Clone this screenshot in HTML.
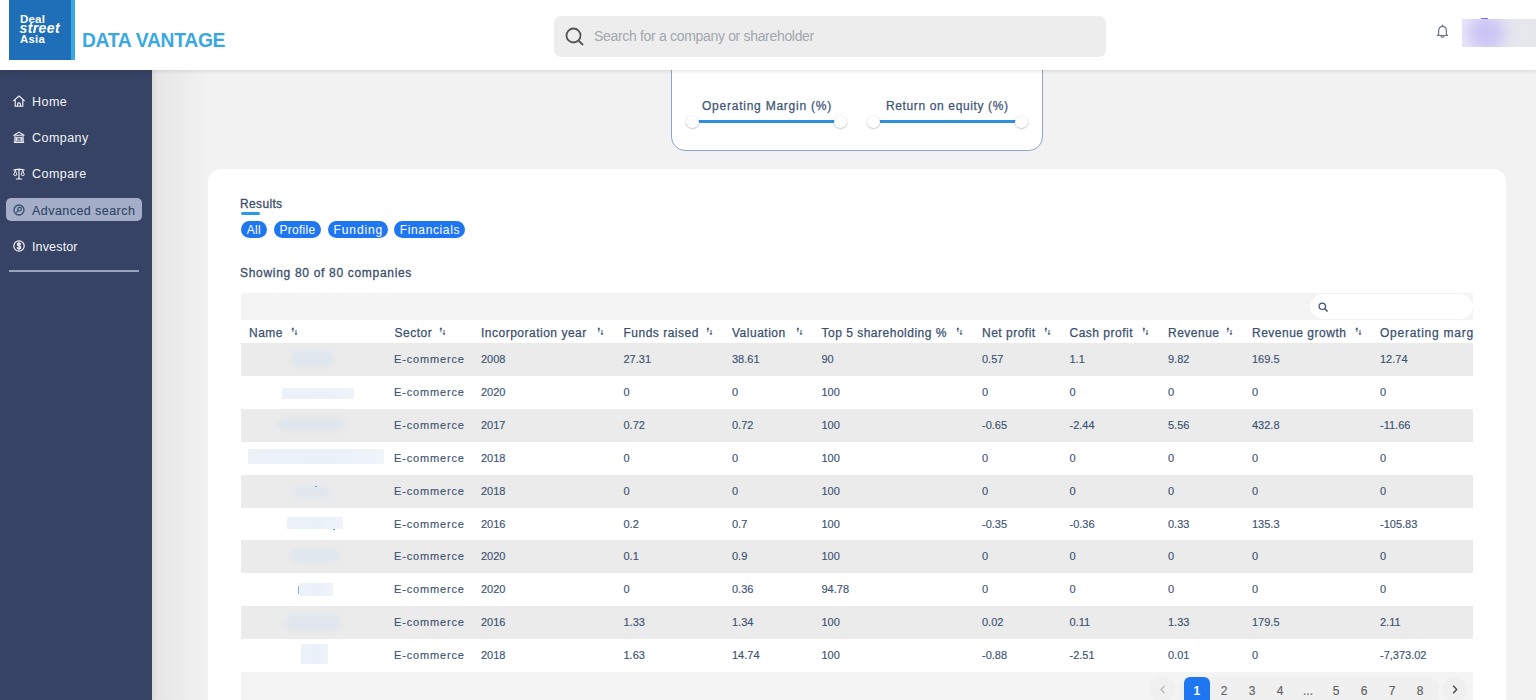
<!DOCTYPE html>
<html><head><meta charset="utf-8">
<style>
*{box-sizing:border-box;margin:0;padding:0}
html,body{width:1536px;height:700px;overflow:hidden;background:#f2f2f2;font-family:"Liberation Sans",sans-serif;position:relative}
.abs{position:absolute}
#header{position:absolute;left:0;top:0;width:1536px;height:70px;background:#fff;box-shadow:0 1px 4px rgba(0,0,0,0.12);z-index:10}
#logo{position:absolute;left:9px;top:0;width:66px;height:60px;background:#1f6fb8;border-right:4px solid #3aa8e0}
#logo .t{position:absolute;left:11px;color:#fff;font-weight:bold;font-size:10px;line-height:10px;letter-spacing:-0.3px}
#brand{position:absolute;left:82px;top:30px;font-size:19.3px;font-weight:bold;color:#3aa8e0;letter-spacing:-0.3px;line-height:22px;white-space:nowrap}
#search{position:absolute;left:554px;top:16px;width:552px;height:41px;background:#ededed;border-radius:7px}
#search .ph{position:absolute;left:40px;top:12px;font-size:14px;color:#a2a7ae;line-height:16px;letter-spacing:-0.32px;white-space:nowrap}
#sidebar{position:absolute;left:0;top:70px;width:152px;height:630px;background:#374364;z-index:5;box-shadow:2px 0 5px rgba(0,0,0,0.07)}
#sshadow{position:absolute;left:152px;top:70px;width:60px;height:630px;background:linear-gradient(90deg,rgba(0,0,0,0.055),rgba(0,0,0,0.03) 35%,rgba(0,0,0,0) 100%)}
.nav{position:absolute;left:0;width:152px;height:23px;color:#f1f3f7;font-size:12.5px;line-height:23px;letter-spacing:0.45px}
.nav span{position:absolute;left:32px;top:0;white-space:nowrap}
.nav svg{position:absolute;left:13px;top:6px}
.nav.sel{left:6px;width:136px;background:#a5aec8;border-radius:5px;color:#2f4866;-webkit-text-stroke:0.15px #2f4866}
.nav.sel span{left:26px;top:1.5px}
.nav.sel svg{left:7px}
#divider{position:absolute;left:9px;top:200px;width:130px;height:2px;background:#9aa3be}
#filter{position:absolute;left:671px;top:20px;width:372px;height:131px;background:#fff;border:1.6px solid #90a2ca;border-radius:14px}
.flabel{position:absolute;font-size:12px;color:#3e5678;white-space:nowrap;line-height:14px;-webkit-text-stroke:0.25px #3e5678}
.track{position:absolute;height:3px;background:#2f8fdb}
.thumb{position:absolute;width:12.5px;height:12.5px;border-radius:50%;background:#fff;box-shadow:0 0.5px 1.5px rgba(0,0,0,0.35)}
#card{position:absolute;left:208px;top:168.5px;width:1298px;height:600px;background:#fff;border-radius:13px}
.ctext{position:absolute;font-size:12px;line-height:14px;color:#3b4e6b;white-space:nowrap;-webkit-text-stroke:0.3px #3b4e6b}
.chip{position:absolute;top:52.5px;height:16.5px;border-radius:9px;background:#1f76f1;color:#fff;font-size:12px;line-height:18px;text-align:center;letter-spacing:0.3px}
#toolbar{position:absolute;left:241px;top:293px;width:1232px;height:27px;background:#f4f4f4;border-radius:3px 3px 0 0}
#tsearch{position:absolute;left:1069px;top:1px;width:163px;height:25px;background:#fff;border-radius:13px;box-shadow:0 0 1px rgba(0,0,0,0.08)}
#thead{position:absolute;left:241px;top:320px;width:1232px;height:23px;background:#fff;overflow:hidden}
.th{position:absolute;top:6px;font-size:12px;line-height:14px;color:#3a5070;white-space:nowrap;letter-spacing:0.5px;-webkit-text-stroke:0.25px #3a5070}
.sort{position:absolute;top:7px}
.tr{position:absolute;left:241px;width:1232px;height:33px;background:#fff;overflow:hidden}
.tr.odd{background:#ebebeb}
.td{position:absolute;top:10px;font-size:11px;line-height:13px;color:#3c5373;white-space:nowrap;-webkit-text-stroke:0.15px #3c5373}
.td.ec{letter-spacing:0.85px}
.blur{position:absolute}
.blur.b{background:#e0e6ed;filter:blur(2px);border-radius:6px}
.blur.r{background:linear-gradient(90deg,#edf2f9,#eaf1f9 60%,#eff4f9);filter:blur(0.4px)}
#pager{position:absolute;left:241px;top:672px;width:1232px;height:40px;background:#f4f4f4}
.pgroup{position:absolute;left:938px;top:5px;width:260px;height:30px;border-radius:12px;background:#f0f0f0}
.pcirc{position:absolute;top:5px;width:25px;height:25px;border-radius:50%;background:#f0f0f0}
.pact{position:absolute;left:943px;top:5px;width:25.5px;height:30px;border-radius:6px;background:#1e76f0;color:#fff;font-size:12px;line-height:29px;text-align:center;font-weight:bold}
.pnum{position:absolute;top:7px;width:24px;height:25px;color:#666;font-size:12px;line-height:25px;text-align:center;-webkit-text-stroke:0.2px #666}
</style></head><body>
<div id="header">
  <div id="logo">
    <div class="t" style="top:13px;font-size:11.5px;line-height:12px;letter-spacing:0.2px">Deal</div>
    <div class="t" style="top:21px;font-style:italic;font-size:14px;line-height:14px;letter-spacing:0.4px;left:10.5px">street</div>
    <div class="t" style="top:33px;font-size:11.3px;line-height:12px;letter-spacing:0.3px">Asia</div>
  </div>
  <div id="brand">DATA VANTAGE</div>
  <div id="search">
    <svg class="abs" style="left:11px;top:11px" width="20" height="20" viewBox="0 0 20 20"><circle cx="8.5" cy="8.5" r="7" fill="none" stroke="#555" stroke-width="1.8"/><line x1="13.5" y1="13.5" x2="18" y2="18" stroke="#555" stroke-width="1.8"/></svg>
    <div class="ph">Search for a company or shareholder</div>
  </div>
  <svg class="abs" style="left:1435px;top:23.5px" width="15" height="15" viewBox="0 0 15 15"><path d="M3.7 10.4 C3.7 8.3 3.5 7.2 3.8 5.6 C4.2 3.5 5.8 2.4 7.5 2.4 C9.2 2.4 10.8 3.5 11.2 5.6 C11.5 7.2 11.3 8.3 11.3 10.4 L12.6 11.5 H2.4 Z" fill="none" stroke="#6b7585" stroke-width="1.2" stroke-linejoin="round"/><path d="M6 11.8 A1.5 1.5 0 0 0 9 11.8" fill="none" stroke="#6b7585" stroke-width="1.2"/><line x1="7.5" y1="1.2" x2="7.5" y2="2.4" stroke="#6b7585" stroke-width="1.3" stroke-linecap="round"/></svg>
  <div class="abs" style="left:1462px;top:19px;width:74px;height:28px;background:linear-gradient(90deg,#ebe8fa 0%,#e4e4f4 45%,#e6e8ee 65%,#e5e7ea 100%);overflow:hidden"><div class="abs" style="left:6px;top:-4px;width:36px;height:36px;border-radius:50%;background:#c9c2f4;filter:blur(8px)"></div></div>
  <div class="abs" style="left:1480.5px;top:18px;width:7px;height:1.3px;background:#7a68e6;border-radius:1px"></div>
</div>
<div id="sidebar">
  <div class="nav" style="top:21px"><svg style="top:4px" width="12" height="12" viewBox="0 0 12 12"><path d="M0.7 5.6 L6 1 L11.3 5.6 M2.2 4.4 V11.2 H9.8 V4.4 M4.6 11.2 V9.2 A1.4 1.4 0 0 1 7.4 9.2 V11.2" fill="none" stroke="#f1f3f7" stroke-width="1.15" stroke-linejoin="round" stroke-linecap="round"/></svg><span>Home</span></div>
  <div class="nav" style="top:57px"><svg style="top:4px" width="12" height="12" viewBox="0 0 12 12"><path d="M0.9 4.2 L6 1.1 L11.1 4.2 Z" fill="none" stroke="#f1f3f7" stroke-width="1.1" stroke-linejoin="round"/><path d="M2 5.3 V11 M10 5.3 V11 M0.8 11.4 H11.2" fill="none" stroke="#f1f3f7" stroke-width="1.3"/><rect x="3.4" y="6.3" width="5.2" height="3.6" fill="none" stroke="#f1f3f7" stroke-width="0.9"/><path d="M4.6 7.1 V9.1 M6 7.1 V9.1 M7.4 7.1 V9.1" stroke="#f1f3f7" stroke-width="0.7"/></svg><span>Company</span></div>
  <div class="nav" style="top:93px"><svg style="top:4.5px" width="12" height="12" viewBox="0 0 12 12"><path d="M6 0.8 V10.6 M3.3 11 H8.7 M0.8 2 Q3.5 1.2 6 1.6 Q8.5 1.2 11.2 2" fill="none" stroke="#f1f3f7" stroke-width="1.2" stroke-linecap="round"/><path d="M2.3 2.3 L0.7 6.8 Q2.3 8.6 3.9 6.8 Z M9.7 2.3 L8.1 6.8 Q9.7 8.6 11.3 6.8 Z" fill="none" stroke="#f1f3f7" stroke-width="1" stroke-linejoin="round"/></svg><span>Compare</span></div>
  <div class="nav sel" style="top:128px"><svg style="top:5.5px" width="12" height="12" viewBox="0 0 12 12"><circle cx="6" cy="6" r="5" fill="none" stroke="#34506c" stroke-width="1.3"/><circle cx="6.6" cy="5.2" r="1.8" fill="none" stroke="#34506c" stroke-width="1.2"/><line x1="5.3" y1="6.5" x2="3.7" y2="8.1" stroke="#34506c" stroke-width="1.2" stroke-linecap="round"/></svg><span>Advanced search</span></div>
  <div class="nav" style="top:166px"><svg style="top:4px" width="12" height="12" viewBox="0 0 12 12"><circle cx="6" cy="6" r="5.2" fill="none" stroke="#f1f3f7" stroke-width="1.2"/><path d="M7.6 4.4 Q7.3 3.2 6 3.2 Q4.4 3.2 4.4 4.5 Q4.4 5.6 6 5.9 Q7.7 6.2 7.7 7.4 Q7.7 8.8 6 8.8 Q4.6 8.8 4.3 7.6 M6 2.4 V9.6" fill="none" stroke="#f1f3f7" stroke-width="1.3" stroke-linecap="round"/></svg><span style="letter-spacing:0.15px">Investor</span></div>
  <div id="divider"></div>
</div>
<div id="sshadow"></div>
<div id="filter"></div>
<div class="flabel" style="left:702px;top:99px;letter-spacing:0.76px">Operating Margin (%)</div>
<div class="track" style="left:693px;top:120px;width:148px"></div>
<div class="thumb" style="left:686.3px;top:115.5px"></div>
<div class="thumb" style="left:834.4px;top:115.5px"></div>
<div class="flabel" style="left:886px;top:99px;letter-spacing:0.63px">Return on equity (%)</div>
<div class="track" style="left:873px;top:120px;width:148px"></div>
<div class="thumb" style="left:867px;top:115.5px"></div>
<div class="thumb" style="left:1015.1px;top:115.5px"></div>
<div id="card">
<div class="ctext" style="left:32px;top:28.5px;letter-spacing:0.35px">Results</div>
<div style="position:absolute;left:33px;top:43px;width:19px;height:3px;border-radius:2px;background:#2a9ae6"></div>
<div class="chip" style="left:32.6px;width:26.1px;letter-spacing:0.3px;text-indent:0.3px">All</div>
<div class="chip" style="left:65.6px;width:47.4px;letter-spacing:0.3px;text-indent:0.3px">Profile</div>
<div class="chip" style="left:120.0px;width:59.8px;letter-spacing:0.9px;text-indent:0.9px">Funding</div>
<div class="chip" style="left:186.3px;width:70.7px;letter-spacing:0.63px;text-indent:0.63px">Financials</div>
<div class="ctext" style="left:32px;top:97.5px;letter-spacing:0.69px">Showing 80 of 80 companies</div>
</div>
<div id="toolbar"><div id="tsearch"><svg width="11" height="11" viewBox="0 0 11 11" style="position:absolute;left:8px;top:7.5px"><circle cx="4.3" cy="4.3" r="3.2" fill="none" stroke="#3c5373" stroke-width="1.2"/><line x1="6.7" y1="6.7" x2="9.6" y2="9.6" stroke="#3c5373" stroke-width="1.4"/></svg></div></div>
<div id="thead">
<div class="th" style="left:8.0px">Name</div><svg class="sort" style="left:50.0px" width="7" height="9" viewBox="0 0 7 9"><path d="M1.9 2 V5.2 M5 3 V6.6" stroke="#3c5373" stroke-width="0.9"/><path d="M0.3 2.4 L1.9 0.3 L3.5 2.4 Z M3.4 6.2 L5 8.3 L6.6 6.2 Z" fill="#3c5373"/></svg>
<div class="th" style="left:153.5px">Sector</div><svg class="sort" style="left:197.5px" width="7" height="9" viewBox="0 0 7 9"><path d="M1.9 2 V5.2 M5 3 V6.6" stroke="#3c5373" stroke-width="0.9"/><path d="M0.3 2.4 L1.9 0.3 L3.5 2.4 Z M3.4 6.2 L5 8.3 L6.6 6.2 Z" fill="#3c5373"/></svg>
<div class="th" style="left:240.0px">Incorporation year</div><svg class="sort" style="left:355.5px" width="7" height="9" viewBox="0 0 7 9"><path d="M1.9 2 V5.2 M5 3 V6.6" stroke="#3c5373" stroke-width="0.9"/><path d="M0.3 2.4 L1.9 0.3 L3.5 2.4 Z M3.4 6.2 L5 8.3 L6.6 6.2 Z" fill="#3c5373"/></svg>
<div class="th" style="left:382.5px">Funds raised</div><svg class="sort" style="left:464.8px" width="7" height="9" viewBox="0 0 7 9"><path d="M1.9 2 V5.2 M5 3 V6.6" stroke="#3c5373" stroke-width="0.9"/><path d="M0.3 2.4 L1.9 0.3 L3.5 2.4 Z M3.4 6.2 L5 8.3 L6.6 6.2 Z" fill="#3c5373"/></svg>
<div class="th" style="left:491.0px">Valuation</div><svg class="sort" style="left:554.5px" width="7" height="9" viewBox="0 0 7 9"><path d="M1.9 2 V5.2 M5 3 V6.6" stroke="#3c5373" stroke-width="0.9"/><path d="M0.3 2.4 L1.9 0.3 L3.5 2.4 Z M3.4 6.2 L5 8.3 L6.6 6.2 Z" fill="#3c5373"/></svg>
<div class="th" style="left:580.5px">Top 5 shareholding %</div><svg class="sort" style="left:714.5px" width="7" height="9" viewBox="0 0 7 9"><path d="M1.9 2 V5.2 M5 3 V6.6" stroke="#3c5373" stroke-width="0.9"/><path d="M0.3 2.4 L1.9 0.3 L3.5 2.4 Z M3.4 6.2 L5 8.3 L6.6 6.2 Z" fill="#3c5373"/></svg>
<div class="th" style="left:741.0px">Net profit</div><svg class="sort" style="left:802.5px" width="7" height="9" viewBox="0 0 7 9"><path d="M1.9 2 V5.2 M5 3 V6.6" stroke="#3c5373" stroke-width="0.9"/><path d="M0.3 2.4 L1.9 0.3 L3.5 2.4 Z M3.4 6.2 L5 8.3 L6.6 6.2 Z" fill="#3c5373"/></svg>
<div class="th" style="left:828.5px">Cash profit</div><svg class="sort" style="left:900.5px" width="7" height="9" viewBox="0 0 7 9"><path d="M1.9 2 V5.2 M5 3 V6.6" stroke="#3c5373" stroke-width="0.9"/><path d="M0.3 2.4 L1.9 0.3 L3.5 2.4 Z M3.4 6.2 L5 8.3 L6.6 6.2 Z" fill="#3c5373"/></svg>
<div class="th" style="left:927.0px">Revenue</div><svg class="sort" style="left:984.5px" width="7" height="9" viewBox="0 0 7 9"><path d="M1.9 2 V5.2 M5 3 V6.6" stroke="#3c5373" stroke-width="0.9"/><path d="M0.3 2.4 L1.9 0.3 L3.5 2.4 Z M3.4 6.2 L5 8.3 L6.6 6.2 Z" fill="#3c5373"/></svg>
<div class="th" style="left:1011.0px">Revenue growth</div><svg class="sort" style="left:1113.5px" width="7" height="9" viewBox="0 0 7 9"><path d="M1.9 2 V5.2 M5 3 V6.6" stroke="#3c5373" stroke-width="0.9"/><path d="M0.3 2.4 L1.9 0.3 L3.5 2.4 Z M3.4 6.2 L5 8.3 L6.6 6.2 Z" fill="#3c5373"/></svg>
<div class="th" style="left:1139px;letter-spacing:0.75px">Operating margin (%)</div>
</div>
<div class="tr odd" style="top:343.0px">
<div class="td ec" style="left:153px">E-commerce</div>
<div class="td" style="left:240.0px">2008</div>
<div class="td" style="left:382.5px">27.31</div>
<div class="td" style="left:491.0px">38.61</div>
<div class="td" style="left:580.5px">90</div>
<div class="td" style="left:741.0px">0.57</div>
<div class="td" style="left:828.5px">1.1</div>
<div class="td" style="left:927.0px">9.82</div>
<div class="td" style="left:1011.0px">169.5</div>
<div class="td" style="left:1139.0px">12.74</div>
</div>
<div class="tr" style="top:375.9px">
<div class="td ec" style="left:153px">E-commerce</div>
<div class="td" style="left:240.0px">2020</div>
<div class="td" style="left:382.5px">0</div>
<div class="td" style="left:491.0px">0</div>
<div class="td" style="left:580.5px">100</div>
<div class="td" style="left:741.0px">0</div>
<div class="td" style="left:828.5px">0</div>
<div class="td" style="left:927.0px">0</div>
<div class="td" style="left:1011.0px">0</div>
<div class="td" style="left:1139.0px">0</div>
</div>
<div class="tr odd" style="top:408.8px">
<div class="td ec" style="left:153px">E-commerce</div>
<div class="td" style="left:240.0px">2017</div>
<div class="td" style="left:382.5px">0.72</div>
<div class="td" style="left:491.0px">0.72</div>
<div class="td" style="left:580.5px">100</div>
<div class="td" style="left:741.0px">-0.65</div>
<div class="td" style="left:828.5px">-2.44</div>
<div class="td" style="left:927.0px">5.56</div>
<div class="td" style="left:1011.0px">432.8</div>
<div class="td" style="left:1139.0px">-11.66</div>
</div>
<div class="tr" style="top:441.7px">
<div class="td ec" style="left:153px">E-commerce</div>
<div class="td" style="left:240.0px">2018</div>
<div class="td" style="left:382.5px">0</div>
<div class="td" style="left:491.0px">0</div>
<div class="td" style="left:580.5px">100</div>
<div class="td" style="left:741.0px">0</div>
<div class="td" style="left:828.5px">0</div>
<div class="td" style="left:927.0px">0</div>
<div class="td" style="left:1011.0px">0</div>
<div class="td" style="left:1139.0px">0</div>
</div>
<div class="tr odd" style="top:474.6px">
<div class="td ec" style="left:153px">E-commerce</div>
<div class="td" style="left:240.0px">2018</div>
<div class="td" style="left:382.5px">0</div>
<div class="td" style="left:491.0px">0</div>
<div class="td" style="left:580.5px">100</div>
<div class="td" style="left:741.0px">0</div>
<div class="td" style="left:828.5px">0</div>
<div class="td" style="left:927.0px">0</div>
<div class="td" style="left:1011.0px">0</div>
<div class="td" style="left:1139.0px">0</div>
</div>
<div class="tr" style="top:507.5px">
<div class="td ec" style="left:153px">E-commerce</div>
<div class="td" style="left:240.0px">2016</div>
<div class="td" style="left:382.5px">0.2</div>
<div class="td" style="left:491.0px">0.7</div>
<div class="td" style="left:580.5px">100</div>
<div class="td" style="left:741.0px">-0.35</div>
<div class="td" style="left:828.5px">-0.36</div>
<div class="td" style="left:927.0px">0.33</div>
<div class="td" style="left:1011.0px">135.3</div>
<div class="td" style="left:1139.0px">-105.83</div>
</div>
<div class="tr odd" style="top:540.4px">
<div class="td ec" style="left:153px">E-commerce</div>
<div class="td" style="left:240.0px">2020</div>
<div class="td" style="left:382.5px">0.1</div>
<div class="td" style="left:491.0px">0.9</div>
<div class="td" style="left:580.5px">100</div>
<div class="td" style="left:741.0px">0</div>
<div class="td" style="left:828.5px">0</div>
<div class="td" style="left:927.0px">0</div>
<div class="td" style="left:1011.0px">0</div>
<div class="td" style="left:1139.0px">0</div>
</div>
<div class="tr" style="top:573.3px">
<div class="td ec" style="left:153px">E-commerce</div>
<div class="td" style="left:240.0px">2020</div>
<div class="td" style="left:382.5px">0</div>
<div class="td" style="left:491.0px">0.36</div>
<div class="td" style="left:580.5px">94.78</div>
<div class="td" style="left:741.0px">0</div>
<div class="td" style="left:828.5px">0</div>
<div class="td" style="left:927.0px">0</div>
<div class="td" style="left:1011.0px">0</div>
<div class="td" style="left:1139.0px">0</div>
</div>
<div class="tr odd" style="top:606.2px">
<div class="td ec" style="left:153px">E-commerce</div>
<div class="td" style="left:240.0px">2016</div>
<div class="td" style="left:382.5px">1.33</div>
<div class="td" style="left:491.0px">1.34</div>
<div class="td" style="left:580.5px">100</div>
<div class="td" style="left:741.0px">0.02</div>
<div class="td" style="left:828.5px">0.11</div>
<div class="td" style="left:927.0px">1.33</div>
<div class="td" style="left:1011.0px">179.5</div>
<div class="td" style="left:1139.0px">2.11</div>
</div>
<div class="tr" style="top:639.1px">
<div class="td ec" style="left:153px">E-commerce</div>
<div class="td" style="left:240.0px">2018</div>
<div class="td" style="left:382.5px">1.63</div>
<div class="td" style="left:491.0px">14.74</div>
<div class="td" style="left:580.5px">100</div>
<div class="td" style="left:741.0px">-0.88</div>
<div class="td" style="left:828.5px">-2.51</div>
<div class="td" style="left:927.0px">0.01</div>
<div class="td" style="left:1011.0px">0</div>
<div class="td" style="left:1139.0px">-7,373.02</div>
</div>
<div class="blur b" style="left:292px;top:351px;width:41px;height:16px"></div>
<div class="blur r" style="left:282px;top:388px;width:72px;height:11px"></div>
<div class="blur b" style="left:278px;top:418px;width:66px;height:13px"></div>
<div class="blur r" style="left:248px;top:449px;width:136px;height:15px"></div>
<div class="blur b" style="left:293px;top:487px;width:37px;height:10px"></div>
<div class="blur r" style="left:287px;top:517px;width:56px;height:12px"></div>
<div class="blur b" style="left:290px;top:549px;width:49px;height:13px"></div>
<div class="blur r" style="left:299px;top:583px;width:34px;height:13px"></div>
<div class="blur b" style="left:286px;top:615px;width:54px;height:16px"></div>
<div class="blur r" style="left:301px;top:644px;width:27px;height:20px"></div>
<div class="abs" style="left:298px;top:586px;width:1.2px;height:8px;background:#80b4ec"></div><div class="abs" style="left:314.5px;top:485.5px;width:2px;height:1.2px;background:#5b9be6"></div><div class="abs" style="left:333px;top:528.5px;width:1.5px;height:1.5px;background:#5b9be6"></div>
<div id="pager">
<div class="pcirc" style="left:909px"><svg width="6" height="9" viewBox="0 0 6 9" style="position:absolute;left:9.5px;top:8px"><path d="M4.5 0.8 L1 4.5 L4.5 8.2" fill="none" stroke="#b0b0b0" stroke-width="1.2"/></svg></div>
<div class="pgroup"></div>
<div class="pact">1</div>
<div class="pnum" style="left:971.0px">2</div>
<div class="pnum" style="left:999.0px">3</div>
<div class="pnum" style="left:1027.0px">4</div>
<div class="pnum" style="left:1055.0px">...</div>
<div class="pnum" style="left:1083.0px">5</div>
<div class="pnum" style="left:1111.0px">6</div>
<div class="pnum" style="left:1139.0px">7</div>
<div class="pnum" style="left:1167.0px">8</div>
<div class="pcirc" style="left:1201px"><svg width="6" height="9" viewBox="0 0 6 9" style="position:absolute;left:10px;top:8px"><path d="M1.2 0.8 L4.7 4.5 L1.2 8.2" fill="none" stroke="#444" stroke-width="1.3"/></svg></div>
</div>
</body></html>
